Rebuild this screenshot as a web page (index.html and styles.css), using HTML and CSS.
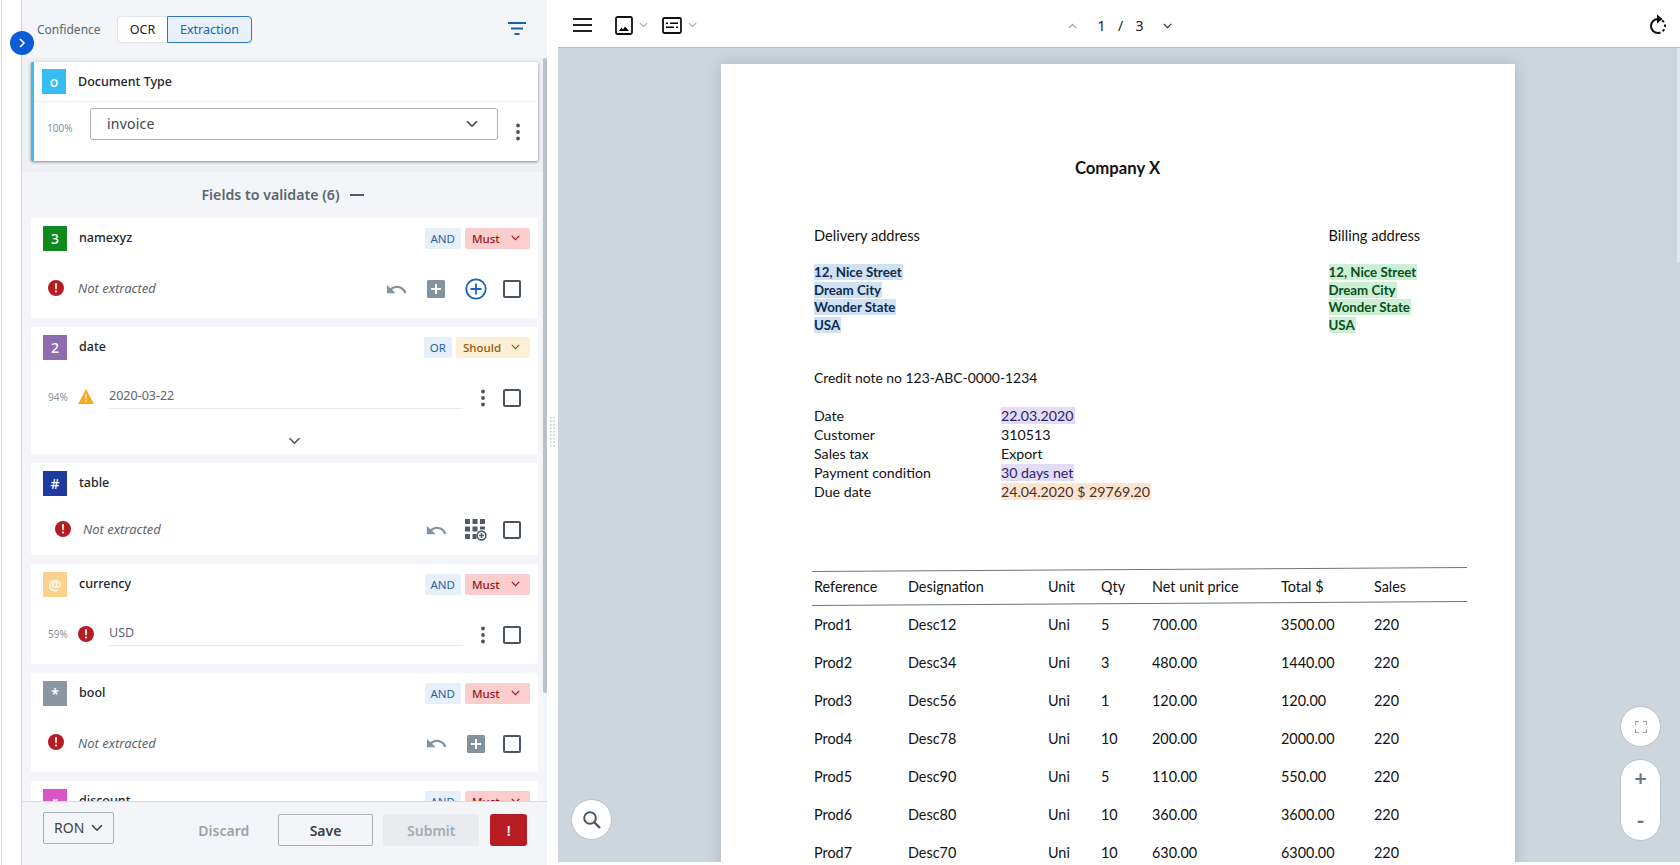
FILE: index.html
```html
<!DOCTYPE html>
<html>
<head>
    <title>Document validation</title>
    <link rel="stylesheet" href="styles.css">
</head>
<body>
    <svg class="sprite" xmlns="http://www.w3.org/2000/svg">
        <symbol id="i-undo" viewBox="0 0 24 24"><path d="M12.5 8c-2.65 0-5.05.99-6.9 2.6L2 7v9h9l-3.62-3.62c1.39-1.16 3.16-1.88 5.12-1.88 3.54 0 6.55 2.31 7.6 5.5l2.37-.78C21.08 11.03 17.15 8 12.5 8z"/></symbol>
        <symbol id="i-plus-box" viewBox="0 0 18 18"><rect width="18" height="18" rx="1.5"/><path d="M8 4h2v4h4v2h-4v4H8v-4H4V8h4z" fill="#fff"/></symbol>
        <symbol id="i-plus-circle" viewBox="0 0 22 22"><circle cx="11" cy="11" r="9.7" fill="none" stroke="currentColor" stroke-width="1.8"/><path d="M10.1 5.5h1.8v4.6h4.6v1.8h-4.6v4.6h-1.8v-4.6H5.5v-1.8h4.6z"/></symbol>
        <symbol id="i-error" viewBox="0 0 16 16"><circle cx="8" cy="8" r="8"/><path d="M7 3.2h2l-.3 6H7.3z" fill="#fff"/><circle cx="8" cy="11.5" r="1.1" fill="#fff"/></symbol>
        <symbol id="i-warn" viewBox="0 0 16 15"><path d="M8 0l8 15H0z"/><path d="M7.3 5.5h1.4l-.2 4.8h-1z" fill="#fff"/><circle cx="8" cy="12.2" r=".9" fill="#fff"/></symbol>
        <symbol id="i-dots" viewBox="0 0 4 18"><circle cx="2" cy="2.5" r="1.9"/><circle cx="2" cy="9" r="1.9"/><circle cx="2" cy="15.5" r="1.9"/></symbol>
        <symbol id="i-chev" viewBox="0 0 12 8"><path d="M1 1.2l5 5 5-5" fill="none" stroke="currentColor" stroke-width="1.6"/></symbol>
        <symbol id="i-grid" viewBox="0 0 22 22"><path d="M0 0h5v5H0zM7.5 0h5v5h-5zM15 0h5v5h-5zM0 7.5h5v5H0zM7.5 7.5h5v5h-5zM15 7.5h5v3h-5zM0 15h5v5H0zM7.5 15h4v5h-4z"/><circle cx="16.5" cy="16.5" r="4.4" fill="#fff" stroke="currentColor" stroke-width="1.6"/><path d="M15.8 14h1.4v1.8H19v1.4h-1.8V19h-1.4v-1.8H14v-1.4h1.8z"/></symbol>
    </svg>

    <div class="app">
        <div class="rail"></div>
        <button class="rail-toggle">
            <svg width="8" height="10" viewBox="0 0 8 10"><path d="M2 1l4 4-4 4" fill="none" stroke="#fff" stroke-width="1.5"/></svg>
        </button>

        <aside class="sidebar">
            <div class="side-header">
                <span class="conf-label">Confidence</span>
                <div class="toggle">
                    <span class="toggle-item">OCR</span>
                    <span class="toggle-item toggle-item--on">Extraction</span>
                </div>
                <svg class="filter-icon" width="18" height="14" viewBox="0 0 18 14"><path d="M0 0h18v2H0zM3 5.500h12v2H3zM6.500 11h5v2h-5z"/></svg>
            </div>

            <div class="side-scroll">
                <div class="side-body">
                    <div class="doc-type">
                        <div class="card card--doc">
                            <div class="card-head card-head--line">
                                <span class="badge badge--sky">o</span>
                                <span class="field-name">Document Type</span>
                            </div>
                            <div class="doc-row">
                                <span class="pct pct--doc">100%</span>
                                <div class="select">
                                    <span class="select-text">invoice</span>
                                    <svg class="select-chev" width="12" height="8"><use href="#i-chev"/></svg>
                                </div>
                                <svg class="dots dots--doc" width="4" height="18"><use href="#i-dots"/></svg>
                            </div>
                        </div>
                    </div>

                    <div class="fields-title">
                        <span>Fields to validate (6)</span>
                        <span class="fields-dash"></span>
                    </div>

                    <div class="card">
                        <div class="card-head">
                            <span class="badge badge--green">3</span>
                            <span class="field-name">namexyz</span>
                            <span class="chip chip--op">AND</span>
                            <span class="chip chip--must">Must <svg width="9" height="6"><use href="#i-chev"/></svg></span>
                        </div>
                        <div class="field-row">
                            <svg class="ic-error" width="16" height="16"><use href="#i-error"/></svg>
                            <span class="not-extracted">Not extracted</span>
                            <span class="slot"><svg class="ic-grey" width="23" height="23"><use href="#i-undo"/></svg></span>
                            <span class="slot"><svg class="ic-grey" width="18" height="18"><use href="#i-plus-box"/></svg></span>
                            <span class="slot"><svg class="ic-blue" width="22" height="22"><use href="#i-plus-circle"/></svg></span>
                            <span class="check-slot"><span class="check"></span></span>
                        </div>
                    </div>

                    <div class="card">
                        <div class="card-head">
                            <span class="badge badge--purple">2</span>
                            <span class="field-name">date</span>
                            <span class="chip chip--op">OR</span>
                            <span class="chip chip--should">Should <svg width="9" height="6"><use href="#i-chev"/></svg></span>
                        </div>
                        <div class="field-row">
                            <span class="pct">94%</span>
                            <svg class="ic-warn" width="16" height="15"><use href="#i-warn"/></svg>
                            <span class="value">2020-03-22</span>
                            <span class="dots-slot"><svg class="dots" width="4" height="18"><use href="#i-dots"/></svg></span>
                            <span class="check-slot"><span class="check"></span></span>
                        </div>
                        <div class="expand"><svg width="13" height="8"><use href="#i-chev"/></svg></div>
                    </div>

                    <div class="card">
                        <div class="card-head">
                            <span class="badge badge--navy">#</span>
                            <span class="field-name">table</span>
                        </div>
                        <div class="field-row field-row--short field-row--inset">
                            <svg class="ic-error" width="16" height="16"><use href="#i-error"/></svg>
                            <span class="not-extracted">Not extracted</span>
                            <span class="slot"><svg class="ic-grey" width="23" height="23"><use href="#i-undo"/></svg></span>
                            <span class="slot"><svg class="ic-dark" width="22" height="22"><use href="#i-grid"/></svg></span>
                            <span class="check-slot"><span class="check"></span></span>
                        </div>
                    </div>

                    <div class="card">
                        <div class="card-head">
                            <span class="badge badge--amber">@</span>
                            <span class="field-name">currency</span>
                            <span class="chip chip--op">AND</span>
                            <span class="chip chip--must">Must <svg width="9" height="6"><use href="#i-chev"/></svg></span>
                        </div>
                        <div class="field-row">
                            <span class="pct">59%</span>
                            <svg class="ic-error" width="16" height="16"><use href="#i-error"/></svg>
                            <span class="value">USD</span>
                            <span class="dots-slot"><svg class="dots" width="4" height="18"><use href="#i-dots"/></svg></span>
                            <span class="check-slot"><span class="check"></span></span>
                        </div>
                    </div>

                    <div class="card">
                        <div class="card-head">
                            <span class="badge badge--slate">*</span>
                            <span class="field-name">bool</span>
                            <span class="chip chip--op">AND</span>
                            <span class="chip chip--must">Must <svg width="9" height="6"><use href="#i-chev"/></svg></span>
                        </div>
                        <div class="field-row field-row--tight">
                            <svg class="ic-error" width="16" height="16"><use href="#i-error"/></svg>
                            <span class="not-extracted">Not extracted</span>
                            <span class="slot"><svg class="ic-grey" width="23" height="23"><use href="#i-undo"/></svg></span>
                            <span class="slot"><svg class="ic-grey" width="18" height="18"><use href="#i-plus-box"/></svg></span>
                            <span class="check-slot"><span class="check"></span></span>
                        </div>
                    </div>

                    <div class="card">
                        <div class="card-head">
                            <span class="badge badge--pink">r</span>
                            <span class="field-name">discount</span>
                            <span class="chip chip--op">AND</span>
                            <span class="chip chip--must">Must <svg width="9" height="6"><use href="#i-chev"/></svg></span>
                        </div>
                    </div>
                </div>
                <div class="scrollbar"></div>
            </div>

            <div class="side-footer">
                <div class="currency">RON <svg width="12" height="8"><use href="#i-chev"/></svg></div>
                <span class="btn btn--text">Discard</span>
                <span class="btn btn--save">Save</span>
                <span class="btn btn--submit">Submit</span>
                <span class="btn btn--alert">!</span>
            </div>
        </aside>

        <div class="splitter"><span class="grip"></span></div>

        <main class="viewer">
            <div class="toolbar">
                <div class="tools tools--left">
                    <svg class="tool-menu" width="19" height="14" viewBox="0 0 19 14"><path d="M0 0h19v2H0zM0 6h19v2H0zM0 12h19v2H0z"/></svg>
                    <svg width="18" height="19" viewBox="0 0 18 19"><rect x="1" y="1" width="16" height="17" rx="1.500" fill="none" stroke="#111" stroke-width="1.800"/><path d="M4 15l2.500-3.500L8 13.500l2-3 4 4.500z"/></svg>
                    <svg class="tool-chev" width="9" height="6"><use href="#i-chev"/></svg>
                    <svg class="tool-card" width="20" height="17" viewBox="0 0 20 17"><rect x="1" y="1" width="18" height="15" rx="1.500" fill="none" stroke="#111" stroke-width="1.800"/><path d="M4 5.500h2v1.500H4zM8 5.500h8v1.500H8zM4 9.500h8v1.500H4zM14 9.500h2v1.500h-2z"/></svg>
                    <svg class="tool-chev" width="9" height="6"><use href="#i-chev"/></svg>
                </div>
                <div class="pager">
                    <svg class="pager-up" width="9" height="6"><use href="#i-chev"/></svg>
                    <span class="pager-text">1</span>
                    <span class="pager-text">/</span>
                    <span class="pager-text">3</span>
                    <svg class="pager-down" width="9" height="6"><use href="#i-chev"/></svg>
                </div>
                <svg class="tool-rotate" width="20" height="22" viewBox="0 0 20 22"><path d="M10 5a7 7 0 0 0 0 14" fill="none" stroke="#111" stroke-width="2"/><path d="M10 19a7 7 0 0 0 0-14" fill="none" stroke="#111" stroke-width="2" stroke-dasharray="2.500 2.500"/><path d="M9 .5l5.500 4.500L9 9.500z"/></svg>
            </div>

            <div class="stage">
                <div class="page">
                    <h1 class="doc-title">Company X</h1>
                    <div class="addresses">
                        <div>
                            <div class="addr-head">Delivery address</div>
                            <div class="addr-lines">
                                <div><span class="hl hl--blue">12, Nice Street</span></div>
                                <div><span class="hl hl--blue">Dream City</span></div>
                                <div><span class="hl hl--blue">Wonder State</span></div>
                                <div><span class="hl hl--blue">USA</span></div>
                            </div>
                        </div>
                        <div>
                            <div class="addr-head">Billing address</div>
                            <div class="addr-lines">
                                <div><span class="hl hl--green">12, Nice Street</span></div>
                                <div><span class="hl hl--green">Dream City</span></div>
                                <div><span class="hl hl--green">Wonder State</span></div>
                                <div><span class="hl hl--green">USA</span></div>
                            </div>
                        </div>
                    </div>
                    <div class="credit">Credit note no 123-ABC-0000-1234</div>
                    <div class="info">
                        <span>Date</span><span><span class="hl hl--purple">22.03.2020</span></span>
                        <span>Customer</span><span>310513</span>
                        <span>Sales tax</span><span>Export</span>
                        <span>Payment condition</span><span><span class="hl hl--purple">30 days net</span></span>
                        <span>Due date</span><span><span class="hl hl--orange">24.04.2020 $ 29769.20</span></span>
                    </div>
                    <div class="rule rule--top"></div>
                    <div class="row row--head"><span>Reference</span><span>Designation</span><span>Unit</span><span>Qty</span><span>Net unit price</span><span>Total $</span><span>Sales</span></div>
                    <div class="rule rule--bottom"></div>
                    <div class="row"><span>Prod1</span><span>Desc12</span><span>Uni</span><span>5</span><span>700.00</span><span>3500.00</span><span>220</span></div>
                    <div class="row"><span>Prod2</span><span>Desc34</span><span>Uni</span><span>3</span><span>480.00</span><span>1440.00</span><span>220</span></div>
                    <div class="row"><span>Prod3</span><span>Desc56</span><span>Uni</span><span>1</span><span>120.00</span><span>120.00</span><span>220</span></div>
                    <div class="row"><span>Prod4</span><span>Desc78</span><span>Uni</span><span>10</span><span>200.00</span><span>2000.00</span><span>220</span></div>
                    <div class="row"><span>Prod5</span><span>Desc90</span><span>Uni</span><span>5</span><span>110.00</span><span>550.00</span><span>220</span></div>
                    <div class="row"><span>Prod6</span><span>Desc80</span><span>Uni</span><span>10</span><span>360.00</span><span>3600.00</span><span>220</span></div>
                    <div class="row"><span>Prod7</span><span>Desc70</span><span>Uni</span><span>10</span><span>630.00</span><span>6300.00</span><span>220</span></div>
                </div>

                <button class="float-btn float-btn--search">
                    <svg width="20" height="20" viewBox="0 0 20 20"><circle cx="8" cy="8" r="5.800" fill="none" stroke="#4a5560" stroke-width="2"/><path d="M12.500 12.500l5.500 5.500" stroke="#4a5560" stroke-width="2.400"/></svg>
                </button>
                <button class="float-btn float-btn--fit">
                    <svg width="12" height="12" viewBox="0 0 12 12"><path d="M0 4V0h4M8 0h4v4M12 8v4H8M4 12H0V8" fill="none" stroke="#7b8792" stroke-width="1.300"/></svg>
                </button>
                <div class="zoom-pill">
                    <span class="zoom-plus">+</span>
                    <span class="zoom-minus">-</span>
                </div>
                <div class="viewer-scroll"></div>
            </div>
        </main>
    </div>
</body>
</html>
```

FILE: styles.css
```css
* {
    box-sizing: border-box;
}

body {
    margin: 0;
    font-family: "Noto Sans", "Open Sans", sans-serif;
    color: #1d2329;
    background-color: #fff;
}

.sprite {
    display: none;
}

.app {
    position: relative;
    display: flex;
    height: 865px;
    overflow: hidden;
}

/* left rail */
.rail {
    width: 21px;
    flex: none;
    background-color: #fff;
    border-left: 1px solid #d9dde2;
    margin-left: 1px;
    border-right: 1px solid #cfd5db;
}

.rail-toggle {
    position: absolute;
    left: 10px;
    top: 31px;
    z-index: 5;
    width: 24px;
    height: 24px;
    padding: 0;
    border: none;
    border-radius: 50%;
    background-color: #0b5cd5;
    display: flex;
    align-items: center;
    justify-content: center;
}

/* sidebar */
.sidebar {
    width: 525px;
    flex: none;
    display: flex;
    flex-direction: column;
    background-color: #f3f5f8;
}

.side-header {
    height: 58px;
    flex: none;
    display: flex;
    align-items: center;
    padding: 0 21px 0 15px;
}

.conf-label {
    font-size: 12px;
    color: #5b6670;
    width: 80px;
}

.toggle {
    display: flex;
    height: 27px;
    font-size: 12.5px;
}

.toggle-item {
    display: flex;
    align-items: center;
    justify-content: center;
    width: 50px;
    background-color: #fff;
    border: 1px solid #dfe3e8;
    border-right: none;
    border-radius: 4px 0 0 4px;
}

.toggle-item--on {
    width: 85px;
    color: #1a5fb4;
    background-color: #e8f1fb;
    border: 1px solid #2f74c8;
    border-radius: 0 4px 4px 0;
}

.filter-icon {
    margin-left: auto;
    fill: #1a5fb4;
}

.side-scroll {
    position: relative;
    flex: 1;
    min-height: 0;
    overflow: hidden;
}

.scrollbar {
    position: absolute;
    right: 0;
    top: 0;
    width: 4px;
    height: 635px;
    background-color: #bcc0c4;
    border-radius: 2px;
}

.doc-type {
    padding: 4px 9px 11px 9px;
    background-color: #eef0f3;
}

.card {
    margin: 0 9px 9px 9px;
    background-color: #fff;
    border-radius: 2px;
}

.card--doc {
    margin: 0;
    height: 99px;
    border-left: 3px solid #3bbdf0;
    box-shadow: 0 1px 3px rgba(40, 50, 60, 0.55);
}

.card-head {
    height: 40px;
    display: flex;
    align-items: center;
    padding: 0 8px 0 12px;
}

.card--doc .card-head {
    padding-left: 8px;
}

.card-head--line {
    border-bottom: 1px solid #f0f1f3;
}

.badge {
    width: 24px;
    height: 25px;
    flex: none;
    display: flex;
    align-items: center;
    justify-content: center;
    font-size: 14px;
    font-weight: 500;
    color: #fff;
}

.badge--sky { background-color: #38bdf2; }
.badge--green { background-color: #0e8a1e; }
.badge--purple { background-color: #8e6cb0; }
.badge--navy { background-color: #1e3a9e; }
.badge--amber { background-color: #fbd38d; }
.badge--slate { background-color: #8a97a3; }
.badge--pink { background-color: #d955c8; }

.field-name {
    flex: 1;
    margin: -2px 0 0 12px;
    font-size: 12.5px;
    font-weight: 500;
    color: #20262c;
}

.card--doc .field-name {
    margin-top: 0;
}

.chip {
    height: 21px;
    display: flex;
    align-items: center;
    font-size: 11.5px;
    border-radius: 2px;
}

.chip--op {
    padding: 0 6px;
    margin-right: 4px;
    color: #2b62a8;
    background-color: #e6f0fa;
}

.chip--must,
.chip--should {
    justify-content: space-between;
    padding: 0 10px 0 7px;
    font-weight: 500;
}

.chip--must {
    width: 65px;
    color: #a11220;
    background-color: #fbcdcd;
}

.chip--should {
    width: 74px;
    color: #8a5a10;
    background-color: #fdeed6;
}

.field-row {
    height: 60px;
    display: flex;
    align-items: center;
    padding: 2px 10px 0 17px;
}

.field-row--short {
    height: 52px;
}

.field-row--tight {
    height: 59px;
}

.field-row--inset {
    padding-left: 24px;
}

.ic-error {
    flex: none;
    margin-top: -3px;
    fill: #b71c23;
}

.ic-warn {
    flex: none;
    margin-top: -3px;
    fill: #f9a91f;
}

.ic-grey {
    fill: #83929f;
}

.ic-blue {
    fill: #1565c0;
    color: #1565c0;
}

.ic-dark {
    fill: #4f5b66;
    color: #4f5b66;
}

.not-extracted {
    flex: 1;
    margin: -2px 0 0 14px;
    font-size: 13px;
    font-style: italic;
    color: #5b6670;
}

.field-row--inset .not-extracted {
    margin-left: 12px;
}

.slot {
    width: 40px;
    flex: none;
    display: flex;
    justify-content: center;
}

.check-slot {
    width: 32px;
    flex: none;
    display: flex;
    justify-content: center;
}

.check {
    width: 18px;
    height: 18px;
    border: 2px solid #4a5560;
    border-radius: 2px;
}

.pct {
    width: 30px;
    flex: none;
    margin-top: -2px;
    font-size: 10px;
    color: #87929c;
}

.pct--doc {
    width: 43px;
    margin: 13px 0 0 13px;
}

.value {
    flex: 1;
    margin: -4px 6px 0 15px;
    height: 26px;
    font-size: 12.5px;
    line-height: 26px;
    color: #5b6670;
    border-bottom: 1px solid #e6e8eb;
}

.dots {
    fill: #4a5560;
}

.dots-slot {
    width: 27px;
    flex: none;
    display: flex;
    justify-content: center;
}

.expand {
    height: 27px;
    display: flex;
    justify-content: center;
    align-items: flex-start;
    padding: 10px 0 0 20px;
    color: #4a5560;
}

.doc-row {
    display: flex;
    align-items: flex-start;
    padding-top: 6px;
}

.select {
    width: 408px;
    height: 32px;
    display: flex;
    align-items: center;
    justify-content: space-between;
    padding: 0 19px 0 16px;
    font-size: 14px;
    letter-spacing: 0.2px;
    color: #3c454e;
    border: 1px solid #aab2ba;
    border-radius: 3px;
}

.select-text {
    margin-top: -2px;
}

.select-chev {
    color: #3c454e;
}

.dots--doc {
    margin: 15px 0 0 18px;
}

.fields-title {
    height: 46px;
    margin: 0 9px;
    padding: 0 4px 1px 0;
    display: flex;
    align-items: center;
    justify-content: center;
    gap: 10px;
    font-size: 14.2px;
    font-weight: 600;
    color: #5c6670;
}

.fields-dash {
    width: 14px;
    height: 2px;
    background-color: #4f5a64;
}

/* footer */
.side-footer {
    height: 64px;
    flex: none;
    position: relative;
    display: flex;
    align-items: center;
    padding: 0 20px 7px 21px;
    border-top: 1px solid #d5dae0;
    background-color: #f3f5f8;
}

.currency {
    width: 71px;
    height: 32px;
    display: flex;
    align-items: center;
    justify-content: space-between;
    padding: 0 10px;
    font-size: 14px;
    color: #39424b;
    border: 1px solid #a7afb7;
    border-radius: 2px;
    margin-top: -5px;
}

.btn {
    height: 32px;
    display: flex;
    align-items: center;
    justify-content: center;
    font-size: 14px;
    font-weight: 600;
    border-radius: 2px;
}

.btn--text {
    width: 60px;
    margin-left: 80px;
    color: #9aa3ac;
    margin-right: 24px;
}

.btn--save {
    width: 96px;
    color: #39424b;
    border: 1px solid #a7afb7;
    margin-right: 10px;
}

.btn--submit {
    width: 96px;
    color: #a3abb3;
    background-color: #e9ebee;
    margin-right: 11px;
}

.btn--alert {
    width: 37px;
    color: #fff;
    background-color: #b71c23;
    border-radius: 3px;
}

.splitter {
    width: 11px;
    flex: none;
    background-color: #fff;
    display: flex;
    align-items: flex-start;
    justify-content: center;
    padding-top: 416px;
}

.grip {
    width: 7px;
    height: 31px;
    background-image: radial-gradient(#cfd3d8 1px, transparent 1.2px);
    background-size: 3.500px 3.500px;
}

/* viewer */
.viewer {
    flex: 1;
    min-width: 0;
    display: flex;
    flex-direction: column;
    height: 862px;
}

.toolbar {
    height: 48px;
    flex: none;
    position: relative;
    display: flex;
    align-items: center;
    padding: 3px 12px 0 15px;
    background-color: #fff;
    border-bottom: 1px solid #b3bbc3;
}

.tools {
    display: flex;
    align-items: center;
}

.tool-menu {
    fill: #222;
    margin-right: 23px;
}

.tool-chev {
    margin: 0 14px 0 6px;
    color: #a9b1b9;
}

.pager {
    position: absolute;
    left: 510px;
    top: 3px;
    height: 45px;
    display: flex;
    align-items: center;
    color: #222;
}

.pager-up {
    transform: rotate(180deg);
    color: #9aa3ac;
}

.pager-down {
    margin-left: 14px;
    color: #333;
}

.pager-text {
    width: 19px;
    text-align: center;
    font-size: 14px;
}

.pager-up + .pager-text {
    margin-left: 15px;
}

.tool-rotate {
    margin-left: auto;
}

.stage {
    position: relative;
    flex: 1;
    min-height: 0;
    overflow: hidden;
    padding-top: 16px;
    background-color: #cdd6dc;
}

.page {
    width: 794px;
    height: 1120px;
    margin-left: 163px;
    padding: 94px 0 0 93px;
    background-color: #fff;
    box-shadow: 0 0 12px rgba(90, 100, 110, 0.3);
    font-family: Lato, "Open Sans", sans-serif;
    font-size: 14.600px;
    color: #111;
}

.doc-title {
    width: 607px;
    margin: 0;
    text-align: center;
    font-size: 16.700px;
    font-weight: 700;
    line-height: 20px;
}

.addresses {
    display: grid;
    grid-template-columns: 514.500px auto;
    margin-top: 49px;
}

.addr-head {
    line-height: 18px;
}

.addr-lines {
    margin-top: 19px;
    font-weight: 700;
    font-size: 13.300px;
    line-height: 17.600px;
}

.hl {
    padding: 0 1px 0 0;
}

.hl--blue { background-color: #cfe1f3; color: #0e2a52; }
.hl--green { background-color: #cbf0d3; color: #0b4d20; }
.hl--purple { background-color: #e2dcf5; color: #2d1c6b; }
.hl--orange { background-color: #fbe4d2; color: #4d301b; }

.credit {
    margin-top: 35px;
    font-size: 13.900px;
    line-height: 18px;
}

.info {
    display: grid;
    grid-template-columns: 187px 1fr;
    margin-top: 19px;
    font-size: 14.200px;
    line-height: 19px;
}

.rule {
    width: 655px;
    height: 1px;
    margin-left: -2.500px;
    background-color: #6f767c;
    transform: rotate(-0.35deg);
}

.rule--top {
    margin-top: 68px;
}

.rule--bottom {
    margin-bottom: 1px;
}

.row {
    display: grid;
    grid-template-columns: 94px 140px 53px 51px 129px 93px 80px;
    height: 38px;
    align-items: center;
    font-size: 14.400px;
}

.row--head {
    height: 33px;
}

/* floating controls */
.float-btn {
    position: absolute;
    width: 41px;
    height: 41px;
    padding: 0;
    border: 1px solid #b9c1c8;
    border-radius: 50%;
    background-color: #fff;
    display: flex;
    align-items: center;
    justify-content: center;
}

.float-btn--search {
    left: 13px;
    top: 751px;
}

.float-btn--fit {
    left: 1062px;
    top: 658px;
}

.zoom-pill {
    position: absolute;
    left: 1062px;
    top: 711px;
    width: 41px;
    height: 82px;
    display: flex;
    flex-direction: column;
    align-items: center;
    justify-content: space-between;
    padding: 2px 0 6px 0;
    background-color: #fff;
    border: 1px solid #b9c1c8;
    border-radius: 21px;
    font-size: 22px;
    font-weight: 600;
    color: #6a7680;
}

.viewer-scroll {
    position: absolute;
    right: 0;
    top: 0;
    width: 3px;
    height: 214px;
    background-color: #e4e7ea;
}
```
